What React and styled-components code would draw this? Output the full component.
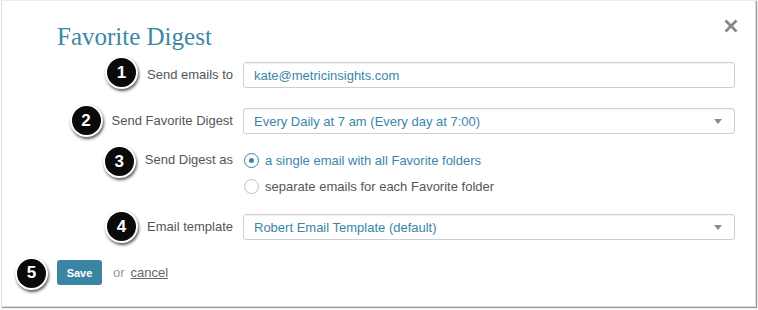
import React from "react";
import styled, { createGlobalStyle } from "styled-components";

const Global = createGlobalStyle`
  html, body { margin: 0; padding: 0; background: #fff; }
  body { font-family: "Liberation Sans", Arial, sans-serif; }
  * { box-sizing: border-box; }
`;

const Page = styled.div`
  width: 758px;
  height: 310px;
  padding-left: 1px;
  background: #fff;
`;

const Dialog = styled.div`
  position: relative;
  width: 755px;
  height: 307px;
  background: #fff;
  border: 1px solid #dcdcdc;
  border-top-color: #ececec;
  box-shadow: 1px 1px 1px #9a9a9a;
  padding: 21px 20px 0 55px;
`;

const Header = styled.div`
  display: flex;
  justify-content: space-between;
  align-items: flex-start;
`;

const Title = styled.h1`
  margin: 0;
  font-family: "Liberation Serif", "DejaVu Serif", serif;
  font-weight: normal;
  font-size: 25px;
  line-height: 30px;
  color: #3d87a7;
`;

const Close = styled.button`
  border: 0;
  background: none;
  padding: 0;
  margin: -3px -3px 0 0;
  width: 14px;
  height: 14px;
  display: flex;
  cursor: pointer;
`;

const Form = styled.div`
  display: flex;
  flex-direction: column;
  margin-top: 10px;
`;

const Row = styled.div`
  display: grid;
  grid-template-columns: 176px 1fr;
  column-gap: 10px;
  align-items: ${(p) => (p.$top ? "start" : "center")};
  margin-top: ${(p) => p.$mt || 0}px;
`;

const Label = styled.div`
  justify-self: end;
  position: relative;
  font-size: 13px;
  color: #555;
  line-height: ${(p) => p.$lh || 26}px;
`;

const Badge = styled.span`
  position: absolute;
  right: calc(100% + 9px);
  top: 50%;
  margin-top: ${(p) => p.$dy || -19}px;
  width: 33px;
  height: 33px;
  border-radius: 50%;
  background: #0a0a0a;
  border: 2px solid #fff;
  box-shadow: 1px 2px 3px rgba(0, 0, 0, 0.65);
  color: #fff;
  font-family: "Liberation Sans", Arial, sans-serif;
  font-weight: bold;
  font-size: 17px;
  display: flex;
  align-items: center;
  justify-content: center;
`;

const Field = styled.div`
  position: relative;
  height: 26px;
  border: 1px solid #cfcfcf;
  border-radius: 3px;
  background: #fff;
  box-shadow: inset 0 1px 1px rgba(0, 0, 0, 0.04);
  display: flex;
  align-items: center;
  padding: 0 10px;
  font-size: 13px;
  color: #3a86a8;
`;

const Caret = styled.span`
  margin-left: auto;
  margin-right: 2px;
  width: 0;
  height: 0;
  border-left: 4px solid transparent;
  border-right: 4px solid transparent;
  border-top: 5px solid #8a8a8a;
`;

const Radios = styled.div`
  display: flex;
  flex-direction: column;
  gap: 6px;
`;

const Option = styled.label`
  display: flex;
  align-items: center;
  gap: 6px;
  height: 20px;
  padding-left: 1px;
  font-size: 13px;
  color: ${(p) => (p.$on ? "#3a86a8" : "#555")};
`;

const Radio = styled.span`
  width: 15px;
  height: 15px;
  border-radius: 50%;
  border: 1.5px solid ${(p) => (p.$on ? "#3a86a8" : "#bdbdbd")};
  background: #fff;
  display: flex;
  align-items: center;
  justify-content: center;
  &::after {
    content: "";
    width: 5px;
    height: 5px;
    border-radius: 50%;
    background: ${(p) => (p.$on ? "#3a86a8" : "transparent")};
  }
`;

const Footer = styled.div`
  display: flex;
  align-items: center;
  gap: 11px;
  margin-top: 20px;
`;

const SaveWrap = styled.div`
  position: relative;
`;

const Save = styled.button`
  width: 45px;
  height: 25px;
  border: 0;
  border-radius: 3px;
  background: #3c84a3;
  color: #fff;
  font-family: "Liberation Sans", Arial, sans-serif;
  font-weight: bold;
  font-size: 11px;
  padding: 0;
  display: block;
`;

const Or = styled.span`
  font-size: 13px;
  color: #9a9a9a;
`;

const Cancel = styled.a`
  margin-left: -5px;
  font-size: 13px;
  color: #666;
  text-decoration: underline;
`;

export default function App() {
  return (
    <>
      <Global />
      <Page>
        <Dialog>
          <Header>
            <Title>Favorite Digest</Title>
            <Close aria-label="close">
              <svg width="14" height="14" viewBox="0 0 14 14">
                <path d="M1.5 1.5 L12.5 12.5 M12.5 1.5 L1.5 12.5" stroke="#878787" strokeWidth="2.8" strokeLinecap="butt" />
              </svg>
            </Close>
          </Header>
          <Form>
            <Row>
              <Label>
                <Badge>1</Badge>
                Send emails to
              </Label>
              <Field>kate@metricinsights.com</Field>
            </Row>
            <Row $mt={20}>
              <Label>
                <Badge $dy={-17}>2</Badge>
                Send Favorite Digest
              </Label>
              <Field>
                Every Daily at 7 am (Every day at 7:00)
                <Caret />
              </Field>
            </Row>
            <Row $mt={16} $top>
              <Label $lh={20}>
                <Badge $dy={-15}>3</Badge>
                Send Digest as
              </Label>
              <Radios>
                <Option $on>
                  <Radio $on />a single email with all Favorite folders
                </Option>
                <Option>
                  <Radio />separate emails for each Favorite folder
                </Option>
              </Radios>
            </Row>
            <Row $mt={18}>
              <Label>
                <Badge $dy={-17}>4</Badge>
                Email template
              </Label>
              <Field>
                Robert Email Template (default)
                <Caret />
              </Field>
            </Row>
            <Footer>
              <SaveWrap>
                <Badge $dy={-16}>5</Badge>
                <Save>Save</Save>
              </SaveWrap>
              <Or>or</Or>
              <Cancel>cancel</Cancel>
            </Footer>
          </Form>
        </Dialog>
      </Page>
    </>
  );
}
